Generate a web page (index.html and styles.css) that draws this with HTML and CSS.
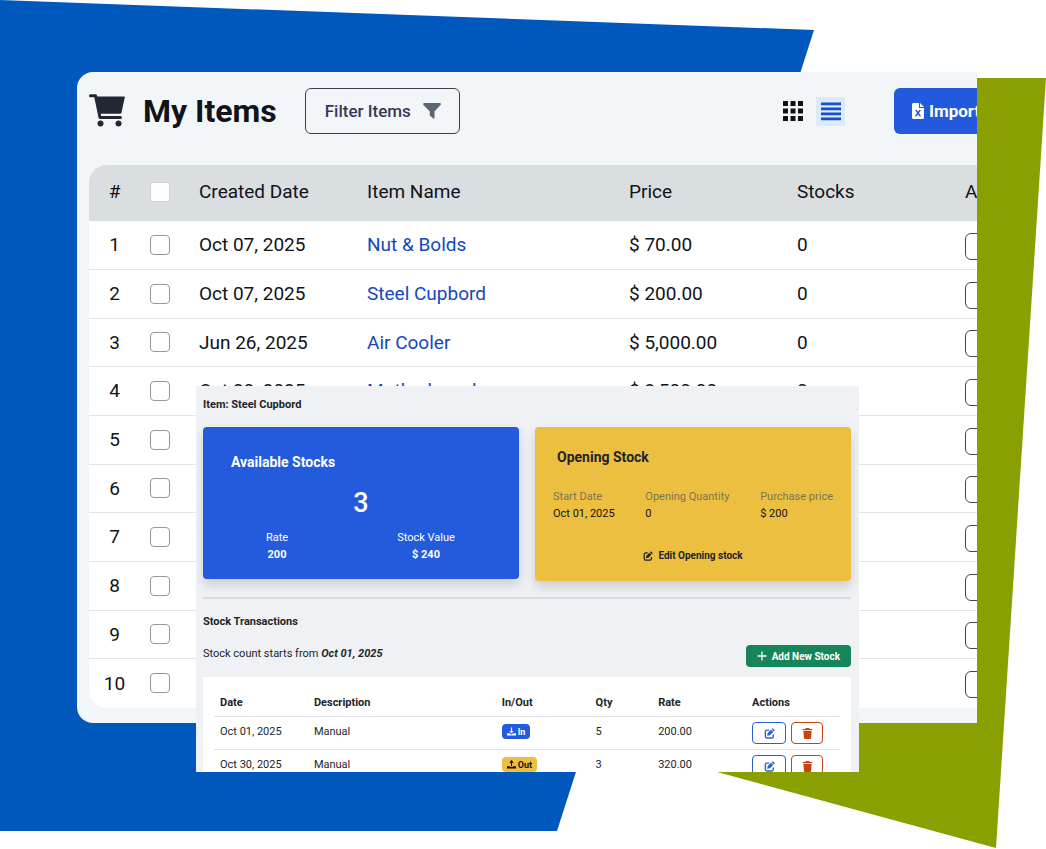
FILE: index.html
```html
<!DOCTYPE html>
<html lang="en">
  <head>
    <meta charset="UTF-8" />
    <meta name="viewport" content="width=device-width, initial-scale=1.0" />
    <title>My Items</title>
    <link rel="stylesheet" href="styles.css">
  </head>
  <body>
    <!-- shared icons -->
    <svg class="sprite" aria-hidden="true">
      <symbol id="edit" viewBox="0 0 16 16">
        <path d="M7.5 3H4a2 2 0 0 0-2 2v7.500a2 2 0 0 0 2 2h7.500a2 2 0 0 0 2-2V9.500" fill="none" stroke="currentColor" stroke-width="2" />
        <path d="M12.600.2l3.200 3.200-1.600 1.600L11 1.800zM10.200 2.600l3.200 3.200-4.800 4.800-4 .8.8-4z" />
      </symbol>
      <symbol id="trash" viewBox="0 0 16 16">
        <path d="M5.500 0h5l.7 1.300H15v2H1v-2h3.800zM2 4.300h12l-.8 10.300a1.500 1.500 0 0 1-1.500 1.400H4.300a1.500 1.500 0 0 1-1.500-1.400z" />
      </symbol>
      <symbol id="download" viewBox="0 0 16 16">
        <path d="M7 1h2v6h3l-4 4-4-4h3zM0 11h4.500L8 13.500 11.500 11H16v4H0z" />
      </symbol>
      <symbol id="upload" viewBox="0 0 16 16">
        <path d="M7 11h2V5h3L8 0 4 5h3zM0 11h5.500v1.500h5V11H16v4H0z" />
      </symbol>
    </svg>

    <section class="hero">
      <svg class="shapes" viewBox="0 0 1046 849" preserveAspectRatio="none" aria-hidden="true">
        <polygon points="0,0 814,30 557,831 0,831" fill="#0058bd" />
        <polygon points="900,78 1046,78 996,848 717,772" fill="#8a9f00" />
      </svg>

      <div class="panel">
        <header class="toolbar">
          <svg class="cart" viewBox="0 0 36 34" aria-hidden="true">
            <path d="M6 2.500H35q1 0 .8 1L32.500 18.500q-.3 1.200-1.500 1.200H9.500z" />
            <path d="M1.500 1.800H6.500L11 23.500H31.500" fill="none" stroke="currentColor" stroke-width="3" stroke-linecap="round" stroke-linejoin="round" />
            <circle cx="11.500" cy="29.500" r="3" />
            <circle cx="29.500" cy="29.500" r="3" />
          </svg>
          <h1 class="title">My Items</h1>
          <button class="filter" type="button">
            Filter Items
            <svg class="funnel" viewBox="0 0 18 16" aria-hidden="true"><path d="M1 0h16q1.500.5.500 2L11.500 8.500V15q-.5 1-1.500.3L6.800 12.500V8.500L.5 2Q-.4.500 1 0z" /></svg>
          </button>
          <div class="views">
            <button class="view" type="button" aria-label="Grid view">
              <svg viewBox="0 0 20 20"><path d="M0 0h5v5H0zM7.500 0h5v5h-5zM15 0h5v5h-5zM0 7.500h5v5H0zM7.500 7.500h5v5h-5zM15 7.500h5v5h-5zM0 15h5v5H0zM7.500 15h5v5h-5zM15 15h5v5h-5z" /></svg>
            </button>
            <button class="view active" type="button" aria-label="List view">
              <svg viewBox="0 0 20 20"><path d="M0 1.500h20v2.700H0zM0 6.500h20v2.700H0zM0 11.500h20v2.700H0zM0 16.500h20v2.700H0z" /></svg>
            </button>
          </div>
          <button class="import" type="button">
            <svg viewBox="0 0 12 16" aria-hidden="true">
              <path fill-rule="evenodd" d="M1.500 0H7v5h5v9.500a1.500 1.500 0 0 1-1.500 1.500h-9A1.500 1.500 0 0 1 0 14.500v-13A1.500 1.500 0 0 1 1.500 0zM8 0l4 4H8zM3 7l2 3-2.200 3.300h1.900L6 11.300l1.300 2h1.900L7 10l2-3H7.200L6 8.700 4.800 7z" />
            </svg>
            Import Items
          </button>
        </header>

        <div class="table-wrap">
          <table class="items">
            <colgroup>
              <col class="c-num"><col class="c-check"><col class="c-date"><col class="c-name"><col class="c-price"><col class="c-stock"><col class="c-action">
            </colgroup>
            <thead>
              <tr>
                <th class="num">#</th>
                <th class="check"><input type="checkbox" aria-label="Select all"></th>
                <th>Created Date</th>
                <th>Item Name</th>
                <th>Price</th>
                <th>Stocks</th>
                <th>Action</th>
              </tr>
            </thead>
            <tbody>
              <tr>
                <td class="num">1</td>
                <td class="check"><input type="checkbox" aria-label="Select item 1"></td>
                <td>Oct 07, 2025</td>
                <td><a href="#">Nut &amp; Bolds</a></td>
                <td>$ 70.00</td>
                <td>0</td>
                <td><button class="more" type="button" aria-label="Actions"></button></td>
              </tr>
              <tr>
                <td class="num">2</td>
                <td class="check"><input type="checkbox" aria-label="Select item 2"></td>
                <td>Oct 07, 2025</td>
                <td><a href="#">Steel Cupbord</a></td>
                <td>$ 200.00</td>
                <td>0</td>
                <td><button class="more" type="button" aria-label="Actions"></button></td>
              </tr>
              <tr>
                <td class="num">3</td>
                <td class="check"><input type="checkbox" aria-label="Select item 3"></td>
                <td>Jun 26, 2025</td>
                <td><a href="#">Air Cooler</a></td>
                <td>$ 5,000.00</td>
                <td>0</td>
                <td><button class="more" type="button" aria-label="Actions"></button></td>
              </tr>
              <tr>
                <td class="num">4</td>
                <td class="check"><input type="checkbox" aria-label="Select item 4"></td>
                <td>Oct 20, 2025</td>
                <td><a href="#">Motherboard</a></td>
                <td>$ 3,500.00</td>
                <td>0</td>
                <td><button class="more" type="button" aria-label="Actions"></button></td>
              </tr>
              <tr>
                <td class="num">5</td>
                <td class="check"><input type="checkbox" aria-label="Select item 5"></td>
                <td></td><td></td><td></td><td></td>
                <td><button class="more" type="button" aria-label="Actions"></button></td>
              </tr>
              <tr>
                <td class="num">6</td>
                <td class="check"><input type="checkbox" aria-label="Select item 6"></td>
                <td></td><td></td><td></td><td></td>
                <td><button class="more" type="button" aria-label="Actions"></button></td>
              </tr>
              <tr>
                <td class="num">7</td>
                <td class="check"><input type="checkbox" aria-label="Select item 7"></td>
                <td></td><td></td><td></td><td></td>
                <td><button class="more" type="button" aria-label="Actions"></button></td>
              </tr>
              <tr>
                <td class="num">8</td>
                <td class="check"><input type="checkbox" aria-label="Select item 8"></td>
                <td></td><td></td><td></td><td></td>
                <td><button class="more" type="button" aria-label="Actions"></button></td>
              </tr>
              <tr>
                <td class="num">9</td>
                <td class="check"><input type="checkbox" aria-label="Select item 9"></td>
                <td></td><td></td><td></td><td></td>
                <td><button class="more" type="button" aria-label="Actions"></button></td>
              </tr>
              <tr>
                <td class="num">10</td>
                <td class="check"><input type="checkbox" aria-label="Select item 10"></td>
                <td></td><td></td><td></td><td></td>
                <td><button class="more" type="button" aria-label="Actions"></button></td>
              </tr>
            </tbody>
          </table>
        </div>
      </div>

      <!-- stock window, lies over the items table -->
      <div class="stock">
        <h2 class="heading">Item: Steel Cupbord</h2>

        <div class="cards">
          <div class="card available">
            <h3>Available Stocks</h3>
            <div class="count">3</div>
            <dl class="facts">
              <div><dt>Rate</dt><dd>200</dd></div>
              <div><dt>Stock Value</dt><dd>$ 240</dd></div>
            </dl>
          </div>
          <div class="card opening">
            <h3>Opening Stock</h3>
            <dl class="facts">
              <div><dt>Start Date</dt><dd>Oct 01, 2025</dd></div>
              <div><dt>Opening Quantity</dt><dd>0</dd></div>
              <div><dt>Purchase price</dt><dd>$ 200</dd></div>
            </dl>
            <button class="edit-opening" type="button"><svg aria-hidden="true"><use href="#edit" /></svg>Edit Opening stock</button>
          </div>
        </div>

        <h2 class="heading transactions">Stock Transactions</h2>
        <div class="since">
          <p>Stock count starts from <em>Oct 01, 2025</em></p>
          <button class="add" type="button">
            <svg viewBox="0 0 10 10" aria-hidden="true"><path d="M5 1v8M1 5h8" stroke="currentColor" stroke-width="1.300" stroke-linecap="round" /></svg>
            Add New Stock
          </button>
        </div>

        <div class="log-wrap">
          <table class="log">
            <colgroup>
              <col class="l-date"><col class="l-desc"><col class="l-inout"><col class="l-qty"><col class="l-rate"><col class="l-actions">
            </colgroup>
            <thead>
              <tr>
                <th>Date</th>
                <th>Description</th>
                <th>In/Out</th>
                <th>Qty</th>
                <th>Rate</th>
                <th>Actions</th>
              </tr>
            </thead>
            <tbody>
              <tr>
                <td>Oct 01, 2025</td>
                <td>Manual</td>
                <td><span class="badge in"><svg aria-hidden="true"><use href="#download" /></svg>In</span></td>
                <td>5</td>
                <td>200.00</td>
                <td>
                  <div class="actions">
                    <button class="edit" type="button" aria-label="Edit"><svg><use href="#edit" /></svg></button>
                    <button class="delete" type="button" aria-label="Delete"><svg><use href="#trash" /></svg></button>
                  </div>
                </td>
              </tr>
              <tr>
                <td>Oct 30, 2025</td>
                <td>Manual</td>
                <td><span class="badge out"><svg aria-hidden="true"><use href="#upload" /></svg>Out</span></td>
                <td>3</td>
                <td>320.00</td>
                <td>
                  <div class="actions">
                    <button class="edit" type="button" aria-label="Edit"><svg><use href="#edit" /></svg></button>
                    <button class="delete" type="button" aria-label="Delete"><svg><use href="#trash" /></svg></button>
                  </div>
                </td>
              </tr>
            </tbody>
          </table>
        </div>
      </div>
    </section>
  </body>
</html>
```
FILE: styles.css
```css
* {
  box-sizing: border-box;
}
body {
  margin: 0;
  background: #fff;
  color: #111318;
  font-family: Roboto, sans-serif;
  font-size: 11px;
}
h1, h2, h3, p, dl, dd {
  margin: 0;
}
button {
  font-family: inherit;
  cursor: pointer;
}
svg {
  fill: currentColor;
  flex: none;
}
.sprite {
  display: none;
}
.hero {
  position: relative;
  padding: 72px 69px 126px 77px;
}
.shapes {
  position: absolute;
  inset: 0;
  width: 100%;
  height: 100%;
}

/* items panel */
.panel {
  position: relative;
  padding: 16px 0 15px 12px;
  overflow: hidden;
  background: #f3f6f9;
  border-radius: 16px 0 0 16px;
}
.toolbar {
  display: flex;
  align-items: center;
  height: 46px;
  margin-bottom: 31px;
}
.cart {
  width: 36px;
  height: 34px;
  color: #222733;
}
.title {
  margin-left: 18px;
  font-size: 32px;
  font-weight: 700;
  white-space: nowrap;
}
.filter {
  display: flex;
  align-items: center;
  gap: 12px;
  height: 46px;
  margin-left: 28px;
  padding: 0 18px 0 19px;
  background: transparent;
  border: 1px solid #3d3f50;
  border-radius: 6px;
  color: #363a57;
  font-size: 17px;
  font-weight: 500;
  white-space: nowrap;
}
.funnel {
  width: 18px;
  height: 16px;
  color: #5b6673;
}
.views {
  display: flex;
  gap: 9px;
  margin-left: auto;
}
.view {
  display: grid;
  place-items: center;
  width: 29px;
  height: 29px;
  padding: 0;
  background: transparent;
  border: 0;
  color: #111;
}
.view svg {
  width: 20px;
  height: 20px;
}
.view.active {
  background: #dcebfc;
  color: #1450c8;
}
.import {
  display: flex;
  align-items: center;
  gap: 5px;
  width: 150px;
  height: 46px;
  margin: 0 -67px 0 49px;
  padding: 0 18px;
  background: #2359dc;
  border: 0;
  border-radius: 6px;
  color: #fff;
  font-size: 17px;
  font-weight: 700;
  white-space: nowrap;
}
.import svg {
  width: 12px;
  height: 16px;
}
.table-wrap {
  overflow: hidden;
  background: #fff;
  border-radius: 18px 0 0 18px;
}
.items {
  width: 1032px;
  table-layout: fixed;
  border-collapse: separate;
  border-spacing: 0;
  font-size: 19px;
}
.c-num { width: 51px; }
.c-check { width: 47px; }
.c-name { width: 262px; }
.c-date, .c-price, .c-stock, .c-action { width: 168px; }
.items th,
.items td {
  padding: 0 12px;
  text-align: left;
  font-weight: 400;
}
.items th {
  height: 56px;
  padding-bottom: 3px;
  background: #d9dee1;
}
.items td {
  height: 49px;
  padding-bottom: 1px;
  border-bottom: 1px solid #e2e4e8;
}
.items tr:nth-child(3n) td {
  height: 48px;
}
.items tr:last-child td {
  border-bottom: 0;
}
.items .num {
  padding-left: 0;
  padding-right: 0;
  text-align: center;
}
.items .check {
  padding-left: 10px;
  padding-right: 10px;
}
.items input {
  display: block;
  appearance: none;
  width: 20px;
  height: 20px;
  margin: 0;
  background: #fff;
  border: 1px solid #96969c;
  border-radius: 4px;
}
.items th input {
  border-color: #cfd3d8;
}
.items a {
  color: #1546c0;
  text-decoration: none;
}
.items td:last-child {
  padding-top: 2px;
  padding-bottom: 0;
}
.more {
  display: block;
  width: 40px;
  height: 27px;
  background: transparent;
  border: 1px solid #44444f;
  border-radius: 6px;
}

/* stock window */
.stock {
  position: absolute;
  top: 386px;
  right: 187px;
  bottom: 77px;
  left: 196px;
  padding: 12px 8px 0 7px;
  overflow: hidden;
  background: #eff1f5;
  color: #212529;
}
.heading {
  font-size: 11px;
  line-height: 14px;
  font-weight: 700;
}
.cards {
  display: grid;
  grid-template-columns: 1fr 1fr;
  align-items: start;
  gap: 16px;
  margin-top: 15px;
  padding-bottom: 16px;
  border-bottom: 2px solid #d9dbdf;
}
.card {
  border-radius: 4px;
  box-shadow: 0 6px 12px rgba(0, 0, 0, .15);
}
.card h3 {
  font-size: 14px;
  line-height: 16px;
  font-weight: 700;
}
.card dt {
  line-height: 16px;
}
.card dd {
  line-height: 18px;
}
.available {
  padding: 27px 28px 15px;
  background: #235bdc;
  color: #fff;
}
.count {
  margin: 17px 0 11px;
  font-size: 27px;
  line-height: 32px;
  font-weight: 500;
  text-align: center;
}
.available .facts {
  display: grid;
  grid-template-columns: 92px 1fr;
  gap: 38px;
  text-align: center;
}
.available dd {
  font-weight: 700;
}
.opening {
  padding: 22px 18px 16px;
  background: #edbf41;
}
.opening h3 {
  padding-left: 4px;
}
.opening .facts {
  display: flex;
  justify-content: space-between;
  margin: 24px 0;
}
.opening dt {
  color: #7a7551;
}
.opening dd {
  color: #111;
}
.edit-opening {
  display: flex;
  align-items: center;
  gap: 5px;
  margin: 0 auto;
  padding: 0;
  background: transparent;
  border: 0;
  color: #212529;
  font-size: 10px;
  line-height: 18px;
  font-weight: 700;
}
.edit-opening svg {
  width: 10px;
  height: 10px;
}
.transactions {
  margin-top: 16px;
}
.since {
  display: flex;
  justify-content: space-between;
  margin-top: 16px;
}
.since p {
  line-height: 18px;
}
.since em {
  font-weight: 700;
}
.add {
  display: flex;
  align-items: center;
  gap: 5px;
  height: 22px;
  padding: 0 11px;
  background: #16865a;
  border: 0;
  border-radius: 4px;
  color: #fff;
  font-size: 10px;
  font-weight: 700;
}
.add svg {
  width: 10px;
  height: 10px;
}
.log-wrap {
  margin-top: 10px;
  padding: 11px 11px 30px;
  background: #fff;
}
.log {
  width: 100%;
  table-layout: fixed;
  border-spacing: 0;
}
.l-date { width: 15%; }
.l-desc { width: 30%; }
.l-inout { width: 15%; }
.l-qty { width: 10%; }
.l-rate { width: 15%; }
.l-actions { width: 15%; }
.log th,
.log td {
  height: 33px;
  padding: 0 6px;
  border-bottom: 1px solid #e0e2e5;
  text-align: left;
}
.log th {
  height: 29px;
  font-weight: 700;
}
.log td {
  padding-bottom: 3px;
}
.log td:last-child {
  padding-bottom: 0;
}
.badge {
  display: inline-flex;
  align-items: center;
  gap: 2px;
  height: 15px;
  padding: 0 5px;
  border-radius: 4px;
  font-size: 9px;
  font-weight: 700;
}
.badge svg {
  width: 9px;
  height: 9px;
}
.in {
  background: #235bdc;
  color: #fff;
}
.out {
  background: #edbf41;
  color: #111;
}
.actions {
  display: flex;
  gap: 5px;
}
.actions button {
  display: grid;
  place-items: center;
  width: 34px;
  height: 22px;
  padding: 0;
  background: #fff;
  border: 1px solid currentColor;
  border-radius: 4px;
}
.actions svg {
  width: 11px;
  height: 11px;
}
.actions .edit {
  color: #2a5fd0;
}
.actions .delete {
  width: 32px;
  color: #c9420f;
}
```
